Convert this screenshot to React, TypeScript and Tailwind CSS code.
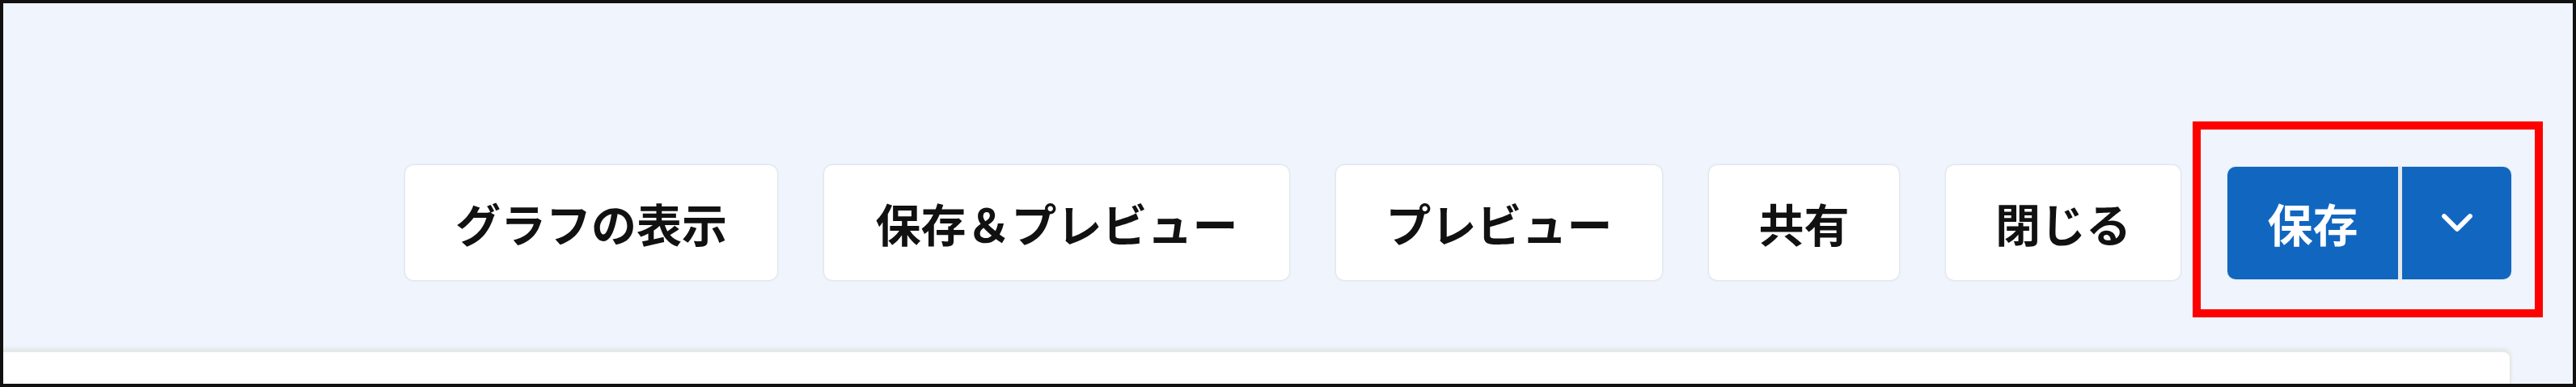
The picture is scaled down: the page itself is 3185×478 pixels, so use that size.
import { ChevronDown } from 'lucide-react';

const actions = [
  { label: 'グラフの表示', width: 'w-[460px]' },
  { label: '保存＆プレビュー', width: 'w-[575px]' },
  { label: 'プレビュー', width: 'w-[403px]' },
  { label: '共有', width: 'w-[235px]' },
  { label: '閉じる', width: 'w-[290px]' },
];

const fontStack = {
  fontFamily: '"Noto Sans CJK JP", "Noto Sans", sans-serif',
};

const App = () => {
  return (
    <div
      className="flex h-[478px] w-[3185px] flex-col overflow-hidden border-4 border-[#111] bg-[#f0f5fd]"
      style={fontStack}
    >
      <div className="flex items-center justify-end gap-[58px] pr-[76px] pt-[200px]">
        {actions.map(({ label, width }) => (
          <button
            key={label}
            type="button"
            className={`flex h-[142px] ${width} items-center justify-center rounded-[10px] bg-white text-[56px] font-bold leading-none text-[#111] shadow-[0_0_3px_rgba(0,0,0,0.18)]`}
          >
            {label}
          </button>
        ))}

        <div className="relative">
          <div className="flex h-[139px] overflow-hidden rounded-[10px] shadow-[0_0_2px_rgba(0,0,0,0.15)]">
            <button
              type="button"
              className="flex w-[211px] items-center justify-center bg-[#1167c0] text-[56px] font-bold leading-none text-white"
            >
              保存
            </button>
            <div className="w-[5px] bg-[#e6e8ea]" />
            <button
              type="button"
              className="flex w-[135px] items-center justify-center bg-[#1167c0] text-white"
            >
              <ChevronDown size={64} strokeWidth={2.2} />
            </button>
          </div>
          {/* annotation frame */}
          <div className="pointer-events-none absolute -bottom-[47px] -left-[43px] -right-[39px] -top-[56px] border-[10px] border-[#ff0000]" />
        </div>
      </div>

      <div className="mr-[76px] mt-[86px] flex-1 rounded-tr-[10px] border-r-2 border-t-[3px] border-[#e6e9e6] bg-white shadow-[0_-2px_4px_rgba(0,0,0,0.06)]" />
    </div>
  );
};

export default App;
